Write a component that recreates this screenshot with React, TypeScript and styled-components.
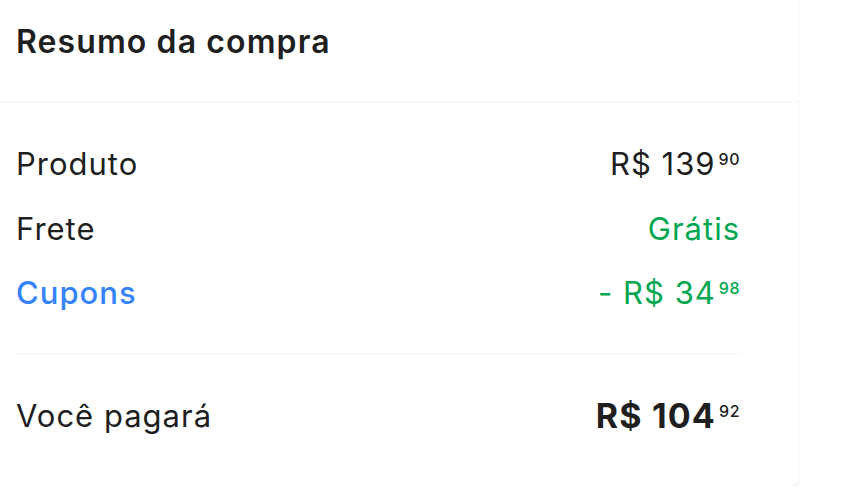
import * as React from "react";
import styled, { createGlobalStyle } from "styled-components";

const GlobalStyle = createGlobalStyle`
	body {
		margin: 0;
		background: #ffffff;
		font-family: "Inter", "Open Sans", sans-serif;
		color: rgba(0, 0, 0, 0.9);
		overflow: hidden;
	}
`;

const Card = styled.section`
	width: 808px;
	margin: -10px 0 0 -10px;
	background: #ffffff;
	border-radius: 0 0 6px 6px;
	box-shadow: 0 1px 2px rgba(0, 0, 0, 0.12), 0 0 1px rgba(0, 0, 0, 0.06);
`;

const Header = styled.header`
	height: 112px;
	padding: 0 0 8px 26px;
	display: flex;
	align-items: center;
	box-sizing: border-box;
	border-bottom: 1px solid rgba(0, 0, 0, 0.04);
`;

const Title = styled.h2`
	margin: 0;
	font-size: 32px;
	font-weight: 600;
	letter-spacing: 1.1px;
	line-height: 36px;
`;

const Body = styled.div`
	padding: 44px 58px 52px 26px;
`;

const Rows = styled.div`
	display: flex;
	flex-direction: column;
	gap: 28.5px;
	padding-bottom: 42px;
	border-bottom: 1px solid rgba(0, 0, 0, 0.04);
`;

const Row = styled.div`
	display: flex;
	justify-content: space-between;
	align-items: center;
	height: 36px;
	font-size: 31px;
	letter-spacing: 1px;
	line-height: 36px;
`;

const Label = styled.span<{ $tone?: "blue" }>`
	color: ${({ $tone }) => ($tone === "blue" ? "#3483fa" : "rgba(0, 0, 0, 0.9)")};
	font-weight: ${({ $tone }) => ($tone === "blue" ? 500 : 400)};
`;

const Value = styled.span<{ $tone?: "green"; $bold?: boolean }>`
	color: ${({ $tone }) => ($tone === "green" ? "#00a650" : "rgba(0, 0, 0, 0.9)")};
	font-weight: ${({ $bold }) => ($bold ? 700 : 400)};
	font-size: ${({ $bold }) => ($bold ? "34px" : "inherit")};
	letter-spacing: ${({ $bold }) => ($bold ? "1.2px" : "inherit")};
	white-space: nowrap;
`;

const Cents = styled.span<{ $bold?: boolean }>`
	display: inline-block;
	font-size: 16px;
	font-weight: 500;
	letter-spacing: 0.5px;
	line-height: 16px;
	vertical-align: top;
	margin-top: 5px;
	margin-left: 3px;
`;

const Total = styled(Row)`
	margin-top: 44px;
`;

const Price = ({
	whole,
	cents,
	prefix = "",
}: {
	whole: string;
	cents: string;
	prefix?: string;
}) => (
	<>
		{prefix}R$ {whole}
		<Cents>{cents}</Cents>
	</>
);

const App = () => {
	return (
		<>
			<GlobalStyle />
			<Card>
				<Header>
					<Title>Resumo da compra</Title>
				</Header>
				<Body>
					<Rows>
						<Row>
							<Label>Produto</Label>
							<Value>
								<Price whole="139" cents="90" />
							</Value>
						</Row>
						<Row>
							<Label>Frete</Label>
							<Value $tone="green">Grátis</Value>
						</Row>
						<Row>
							<Label $tone="blue">Cupons</Label>
							<Value $tone="green">
								<Price prefix="- " whole="34" cents="98" />
							</Value>
						</Row>
					</Rows>
					<Total>
						<Label>Você pagará</Label>
						<Value $bold>
							<Price whole="104" cents="92" />
						</Value>
					</Total>
				</Body>
			</Card>
		</>
	);
};

export default App;
